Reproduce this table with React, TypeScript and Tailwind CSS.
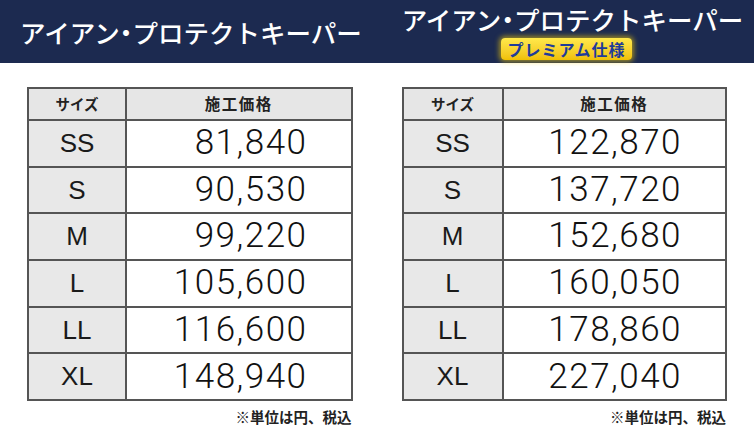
import React from "react";

const jp = { fontFamily: '"Noto Sans CJK JP", "Noto Sans", sans-serif' };
const num = { fontFamily: '"Liberation Sans", Arial, sans-serif' };
const numLight = { fontFamily: 'Roboto, "Liberation Sans", Arial, sans-serif' };

type Row = [string, string];

const left: Row[] = [
  ["SS", "81,840"],
  ["S", "90,530"],
  ["M", "99,220"],
  ["L", "105,600"],
  ["LL", "116,600"],
  ["XL", "148,940"],
];
const right: Row[] = [
  ["SS", "122,870"],
  ["S", "137,720"],
  ["M", "152,680"],
  ["L", "160,050"],
  ["LL", "178,860"],
  ["XL", "227,040"],
];

function Title() {
  return (
    <span className="text-white text-[25.5px] font-medium leading-none whitespace-nowrap" style={jp}>
      アイアン<span className="[font-feature-settings:'palt']">・</span>プロテクトキーパー
    </span>
  );
}

function PriceTable({ rows, firstW }: { rows: Row[]; firstW: string }) {
  return (
    <div className="flex flex-col">
      <div className="border-2 border-[#555] flex flex-col">
        <div className="flex h-[30px] bg-[#e6e6e6]">
          <div
            className={`${firstW} shrink-0 border-r-2 border-[#555] flex items-center justify-center text-[14.5px] font-bold text-[#222]`}
            style={jp}
          >
            サイズ
          </div>
          <div
            className="flex-1 flex items-center justify-center text-[15.5px] font-bold text-[#222] tracking-[1.5px]"
            style={jp}
          >
            施工価格
          </div>
        </div>
        {rows.map(([s, p]) => (
          <div key={s} className="flex h-[46.7px] border-t-2 border-[#555]">
            <div
              className={`${firstW} shrink-0 border-r-2 border-[#555] bg-[#e8e8e8] flex items-center justify-center text-[26px] text-[#1a1a1a]`}
              style={num}
            >
              {s}
            </div>
            <div
              className="flex-1 bg-white flex items-center justify-end pr-[43px] text-[35px] font-light tracking-[1.5px] text-[#111]"
              style={numLight}
            >
              {p}
            </div>
          </div>
        ))}
      </div>
      <div
        className="mt-[5px] text-right text-[14.5px] font-bold text-[#222] pr-[1px]"
        style={jp}
      >
        ※単位は円、税込
      </div>
    </div>
  );
}

export default function App() {
  return (
    <div className="w-[754px] h-[440px] bg-white overflow-hidden">
      <div className="h-[63px] bg-[#1c2a50] grid grid-cols-2">
        <div className="flex items-center pl-[20px]">
          <Title />
        </div>
        <div className="flex flex-col items-center pt-[6px] pl-[14px]">
          <Title />
          <span
            className="mt-[6px] mr-[12px] px-[7px] h-[22px] rounded-[4px] flex items-center text-[16px] font-bold text-[#1f3c99] bg-gradient-to-b from-[#ffe94a] to-[#f0c000] shadow-[0_0_5px_2px_rgba(255,214,0,0.55)] tracking-[1px] leading-none"
            style={jp}
          >
            プレミアム仕様
          </span>
        </div>
      </div>
      <div className="grid grid-cols-2 gap-[49px] px-[27px] pt-[24px]">
        <PriceTable rows={left} firstW="w-[98px]" />
        <PriceTable rows={right} firstW="w-[100px]" />
      </div>
    </div>
  );
}
